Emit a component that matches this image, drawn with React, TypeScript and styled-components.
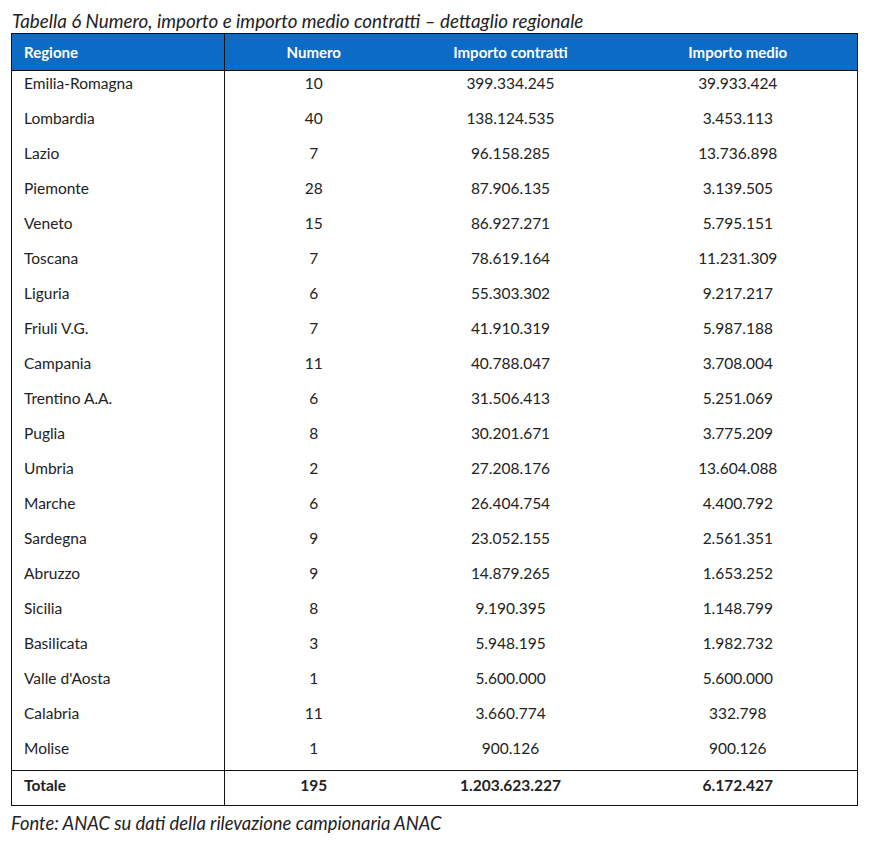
import React from "react";
import styled, { createGlobalStyle } from "styled-components";

const Global = createGlobalStyle`
  html, body { margin: 0; padding: 0; background: #fff; }
  body { font-family: Lato, "Open Sans", sans-serif; color: #1a1a1a; }
`;

const Page = styled.div`
  padding: 8px 13px 0 11px;
  width: 847px;
`;

const Caption = styled.div`
  font-family: Lato, sans-serif;
  font-style: italic;
  font-size: 18.8px;
  line-height: 25px;
  color: #222;
  padding-left: 1px;
`;

const Table = styled.table`
  width: 847px;
  border-collapse: collapse;
  border: 1px solid #111;
  table-layout: fixed;
  font-size: 15.5px;
`;

const HeadCell = styled.th<{ $left?: boolean }>`
  background: #0b6bc5;
  color: #fff;
  font-weight: 700;
  font-size: 15px;
  height: 36px;
  padding: 0 12px;
  text-align: ${(p) => (p.$left ? "left" : "center")};
  border-right: ${(p) => (p.$left ? "1px solid #111" : "none")};
  border-bottom: 1px solid #111;
`;

const Cell = styled.td<{ $left?: boolean; $bold?: boolean; $tall?: boolean }>`
  height: 35px;
  box-sizing: border-box;
  padding: ${(p) => (p.$tall ? "5px" : "3px")} 12px 0;
  line-height: 18px;
  vertical-align: top;
  text-align: ${(p) => (p.$left ? "left" : "center")};
  border-right: ${(p) => (p.$left ? "1px solid #111" : "none")};
  font-weight: ${(p) => (p.$bold ? 700 : 400)};
  color: #222;
`;

const TotalRow = styled.tr`
  border-top: 1px solid #111;
`;

const Source = styled.div`
  font-family: Lato, sans-serif;
  font-style: italic;
  font-size: 18.4px;
  line-height: 24px;
  color: #222;
  margin-top: 5px;
`;

const rows: [string, string, string, string][] = [
  ["Emilia-Romagna", "10", "399.334.245", "39.933.424"],
  ["Lombardia", "40", "138.124.535", "3.453.113"],
  ["Lazio", "7", "96.158.285", "13.736.898"],
  ["Piemonte", "28", "87.906.135", "3.139.505"],
  ["Veneto", "15", "86.927.271", "5.795.151"],
  ["Toscana", "7", "78.619.164", "11.231.309"],
  ["Liguria", "6", "55.303.302", "9.217.217"],
  ["Friuli V.G.", "7", "41.910.319", "5.987.188"],
  ["Campania", "11", "40.788.047", "3.708.004"],
  ["Trentino A.A.", "6", "31.506.413", "5.251.069"],
  ["Puglia", "8", "30.201.671", "3.775.209"],
  ["Umbria", "2", "27.208.176", "13.604.088"],
  ["Marche", "6", "26.404.754", "4.400.792"],
  ["Sardegna", "9", "23.052.155", "2.561.351"],
  ["Abruzzo", "9", "14.879.265", "1.653.252"],
  ["Sicilia", "8", "9.190.395", "1.148.799"],
  ["Basilicata", "3", "5.948.195", "1.982.732"],
  ["Valle d'Aosta", "1", "5.600.000", "5.600.000"],
  ["Calabria", "11", "3.660.774", "332.798"],
  ["Molise", "1", "900.126", "900.126"],
];

export default function App() {
  return (
    <Page>
      <Global />
      <Caption>Tabella 6 Numero, importo e importo medio contratti – dettaglio regionale</Caption>
      <Table>
        <colgroup>
          <col style={{ width: 213 }} />
          <col style={{ width: 178 }} />
          <col style={{ width: 216 }} />
          <col />
        </colgroup>
        <thead>
          <tr>
            <HeadCell $left>Regione</HeadCell>
            <HeadCell>Numero</HeadCell>
            <HeadCell>Importo contratti</HeadCell>
            <HeadCell>Importo medio</HeadCell>
          </tr>
        </thead>
        <tbody>
          {rows.map((r) => (
            <tr key={r[0]}>
              <Cell $left>{r[0]}</Cell>
              <Cell>{r[1]}</Cell>
              <Cell>{r[2]}</Cell>
              <Cell>{r[3]}</Cell>
            </tr>
          ))}
          <TotalRow>
            <Cell $left $bold $tall>Totale</Cell>
            <Cell $bold $tall>195</Cell>
            <Cell $bold $tall>1.203.623.227</Cell>
            <Cell $bold $tall>6.172.427</Cell>
          </TotalRow>
        </tbody>
      </Table>
      <Source>Fonte: ANAC su dati della rilevazione campionaria ANAC</Source>
    </Page>
  );
}
